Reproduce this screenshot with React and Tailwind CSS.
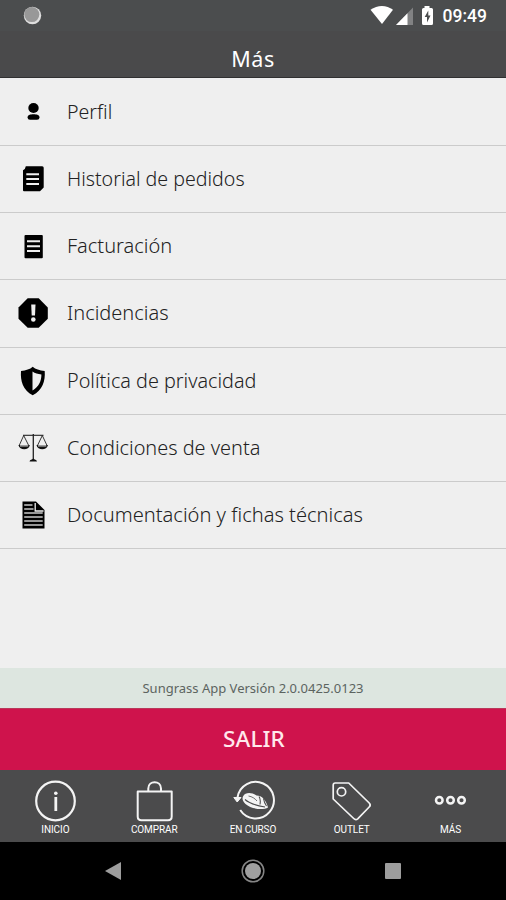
import React from 'react';

const PersonIcon = () => (
  <svg className="h-[30px] w-[30px]" viewBox="0 0 30 30">
    <ellipse cx="15.500" cy="11" rx="5.200" ry="5" />
    <path d="M9.600 20.500C9.600 18 12 17.300 15.500 17.300S21.500 18 21.500 20.500Q21.500 22.700 19 22.700H12Q9.600 22.700 9.600 20.500Z" />
  </svg>
);

const HistoryIcon = () => (
  <svg className="h-[30px] w-[30px]" viewBox="0 0 30 30">
    <path d="M7.800 2.200H24.200Q25.700 2.200 25.700 3.700V23.500L22 27.300H6Q5 27.300 5 26.300V6.300L6.800 5Z" />
    <path d="M8.300 10.200H21M8.300 15H21M8.300 19.900H21" stroke="#efefef" strokeWidth="2" />
  </svg>
);

const InvoiceIcon = () => (
  <svg className="h-[30px] w-[30px]" viewBox="0 0 30 30">
    <rect x="6.500" y="4" width="18.300" height="23.300" rx="1" />
    <path d="M9 10.200H22M9 15.200H22M9 20H22" stroke="#efefef" strokeWidth="2" />
  </svg>
);

const AlertIcon = () => (
  <svg className="h-[30px] w-[30px]" viewBox="0 0 30 30">
    <path d="M9.700.3H20.700L29.800 9.400V20.700L20.700 29.700H9.700L.5 20.700V9.400Z" />
    <path d="M13.200 6.500H17.500L17 17.500H13.700Z" fill="#efefef" />
    <circle cx="15.300" cy="21.500" r="2.300" fill="#efefef" />
  </svg>
);

const ShieldIcon = () => (
  <svg className="h-[30px] w-[30px]" viewBox="0 0 30 30">
    <path d="M14.700.7C17.500 3.200 21.500 4.300 26.700 4.900C27.500 15 24.500 24 14.700 29.200C5 24 2.200 15 3 4.900C8 4.300 12 3.200 14.700.7Z" />
    <path d="M14.500 5.600C17 7.300 19.800 8.200 23.400 8.600C23.400 15.500 21 20.500 14.500 24.600Z" fill="#efefef" />
  </svg>
);

const ScalesIcon = () => (
  <svg className="h-[30px] w-[30px]" viewBox="0 0 30 30" fill="none" stroke="#222" strokeWidth=".9">
    <path d="M5 2.300H25.500" strokeWidth="1.100" />
    <path d="M15.300 1V27" strokeWidth="1.300" />
    <path d="M5.700 2.500L1.200 12.500M5.700 2.500L10.700 12.500M24.300 2.500L19.500 12.500M24.300 2.500L29 12.500" />
    <path d="M.5 12H11.800C11 17.800 1.500 17.800.5 12ZM18.500 12H29.900C29 17.800 19.500 17.800 18.500 12Z" fill="#111" stroke="none" />
    <path d="M2 12.800H10.200M20 12.800H28.300" stroke="#ccc" strokeWidth="1.200" />
    <path d="M11.500 28.500C12 26.500 14 26.800 15.300 25.500C16.500 26.800 18.500 26.500 19 28.500Z" fill="#111" stroke="none" />
  </svg>
);

const DocumentIcon = () => (
  <svg className="h-[30px] w-[30px]" viewBox="0 0 30 30">
    <path d="M4.500 1.500H18L26.500 10V28.500H4.500Z" />
    <path d="M6.200 5H14.500M6.200 9H15.500M6.200 13H24.700M6.200 17H24.700M6.200 21H24.700M6.200 25H24.700" stroke="#c8c8c8" strokeWidth="1.300" />
    <path d="M17.200 3V11H25.500" stroke="#efefef" fill="none" strokeWidth="1.300" />
  </svg>
);

const items = [
  { label: 'Perfil', Icon: PersonIcon, text: 'text-[19.6px]' },
  { label: 'Historial de pedidos', Icon: HistoryIcon, text: 'text-[19.6px]' },
  { label: 'Facturación', Icon: InvoiceIcon, text: 'text-[20px]' },
  { label: 'Incidencias', Icon: AlertIcon, text: 'text-[20px]' },
  { label: 'Política de privacidad', Icon: ShieldIcon, text: 'text-[19.8px]' },
  { label: 'Condiciones de venta', Icon: ScalesIcon, text: 'text-[19.9px]' },
  { label: 'Documentación y fichas técnicas', Icon: DocumentIcon, text: 'text-[20.1px]' },
];

const line = { fill: 'none', stroke: '#f4f4f4', strokeWidth: 2, strokeLinejoin: 'round' };

const InfoIcon = () => (
  <svg className="h-11 w-11" viewBox="0 0 44 44">
    <circle cx="22.500" cy="22" r="19.300" {...line} strokeWidth="2.200" />
    <path d="M22.800 18V32" stroke="#f4f4f4" strokeWidth="2.800" />
    <circle cx="22.800" cy="14.200" r="1.800" fill="#f4f4f4" />
  </svg>
);

const BagIcon = () => (
  <svg className="h-11 w-11" viewBox="0 0 44 44" {...line}>
    <path d="M5.700 12.500H39.700V37.500Q39.700 41.200 36 41.200H9.400Q5.700 41.200 5.700 37.500Z" />
    <path d="M16.300 12V9.500C16.300 1.200 29 1.200 29 9.500V12" />
  </svg>
);

const ProgressIcon = () => (
  <svg className="h-11 w-11" viewBox="0 0 44 44">
    <path d="M6.500 18.500A18.300 18.300 0 1 1 9.200 31" {...line} />
    <path d="M2.800 18.500H10L6.200 23Z" fill="#f4f4f4" stroke="#f4f4f4" />
    <path d="M12 17.500C14.500 12.800 21 13.500 25.500 16.500C31 16.500 35 21 37 28.500C32 31.500 20 30 14.500 25C11.500 22 11 19.500 12 17.500Z" fill="#f4f4f4" />
    <path d="M14 20.500C18 24 25 26.500 34 28M28 17.500C29.500 19.500 29.500 22.500 29 25.500M32.500 19.500C33 22.500 34 25 35.500 27" fill="none" stroke="#4b4b4c" strokeWidth="1.100" />
    <path d="M17.500 17C21 17.500 24 19.500 26 22" fill="none" stroke="#4b4b4c" strokeWidth=".8" />
  </svg>
);

const TagIcon = () => (
  <svg className="h-11 w-11" viewBox="0 0 44 44" {...line}>
    <path d="M5.200 4H18.700L39.200 24Q41.200 26 39.200 28L27.700 39.800Q25.700 41.500 23.700 39.500L3.200 20V6.300Q3.200 4 5.200 4Z" strokeWidth="1.700" />
    <circle cx="11.500" cy="12.800" r="4.200" strokeWidth="1.700" />
  </svg>
);

const MoreIcon = () => (
  <svg className="h-11 w-11" viewBox="0 0 44 44" {...line} strokeWidth="2.500">
    <circle cx="10.300" cy="21.300" r="3.300" />
    <circle cx="21.500" cy="21.300" r="3.300" />
    <circle cx="32.500" cy="21.300" r="3.300" />
  </svg>
);

const tabs = [
  { label: 'INICIO', Icon: InfoIcon },
  { label: 'COMPRAR', Icon: BagIcon },
  { label: 'EN CURSO', Icon: ProgressIcon },
  { label: 'OUTLET', Icon: TagIcon },
  { label: 'MÁS', Icon: MoreIcon },
];

export default function App() {
  return (
    <div className="flex h-[900px] w-[506px] flex-col overflow-hidden bg-[#efefef] font-['Noto_Sans',sans-serif]">
      <div className="flex h-[31px] shrink-0 items-center justify-between bg-[#4b4d4e] pl-[23px] pr-[19px]">
        <svg className="h-[19px] w-[19px]" viewBox="0 0 19 19">
          <circle cx="9.500" cy="9.500" r="8.700" fill="#dedede" />
          <circle cx="8.800" cy="8.600" r="7.500" fill="#989898" />
        </svg>
        <div className="flex items-center">
          <svg className="h-[22px] w-[68px]" viewBox="0 0 68 22">
            <path d="M.5 4.800C7.500-.4 16.500-.4 23 4.800L12 19Z" fill="#fff" />
            <path d="M43 2.500V20H26Z" fill="#818283" />
            <path d="M37.500 8.200V20H26Z" fill="#fff" />
            <path d="M54.500 1H59.500V3H61.500Q63 3 63 4.500V18.500Q63 20 61.500 20H53.500Q52 20 52 18.500V4.500Q52 3 53.500 3H54.500Z" fill="#fff" />
            <path d="M58.300 5.500L54.700 12H57V17.500L60.500 10.500H58.300Z" fill="#4b4d4e" />
          </svg>
          <span className="ml-[5px] whitespace-nowrap font-['Roboto',sans-serif] text-[17.5px] leading-[22px] font-medium text-white">09:49</span>
        </div>
      </div>
      <header className="flex h-[47px] shrink-0 items-center justify-center border-b border-[#303031] bg-[#4a4a4b] pt-[9px]">
        <h1 className="text-[21.5px] leading-7 tracking-[0.6px] text-white">Más</h1>
      </header>
      <ul className="flex h-[471px] shrink-0 flex-col pt-px">
        {items.map(({ label, Icon, text }) => (
          <li key={label} className="flex min-h-0 flex-1 items-center border-b border-[#cbcbcb] pl-[18px]">
            <Icon />
            <span className={'ml-[19px] whitespace-nowrap leading-6 font-light text-[#222] ' + text}>{label}</span>
          </li>
        ))}
      </ul>
      <div className="mt-auto flex h-10 shrink-0 items-center justify-center bg-[#dde6e0]">
        <p className="whitespace-nowrap text-[13px] leading-5 text-[#5c6460]">Sungrass App Versión 2.0.0425.0123</p>
      </div>
      <button className="h-[62px] shrink-0 border-t border-[#b83a5a] bg-[#cf134c] pb-px pl-[2px] text-[22.5px] leading-7 font-medium tracking-[0.1px] text-[#ffe8ec]">SALIR</button>
      <nav className="grid h-[72px] shrink-0 grid-cols-5 bg-[#4b4b4c] px-[6px]">
        {tabs.map(({ label, Icon }) => (
          <div key={label} className="flex flex-col items-center pt-[9px]">
            <Icon />
            <span className="whitespace-nowrap font-['Roboto',sans-serif] text-[10px] leading-[13px] tracking-[-0.1px] text-white">{label}</span>
          </div>
        ))}
      </nav>
      <div className="flex h-[58px] shrink-0 items-center justify-between bg-black pl-[105px] pr-[105px]">
        <svg className="h-[18px] w-4" viewBox="0 0 16 18"><path d="M0 9L16 0V18Z" fill="#9d9d9d" /></svg>
        <svg className="h-6 w-6" viewBox="0 0 24 24">
          <circle cx="12" cy="12" r="10.800" fill="none" stroke="#858585" strokeWidth="1.500" />
          <circle cx="12" cy="12" r="8" fill="#a0a0a0" />
        </svg>
        <div className="h-4 w-4 rounded-[1px] bg-[#9d9d9d]" />
      </div>
    </div>
  );
}
